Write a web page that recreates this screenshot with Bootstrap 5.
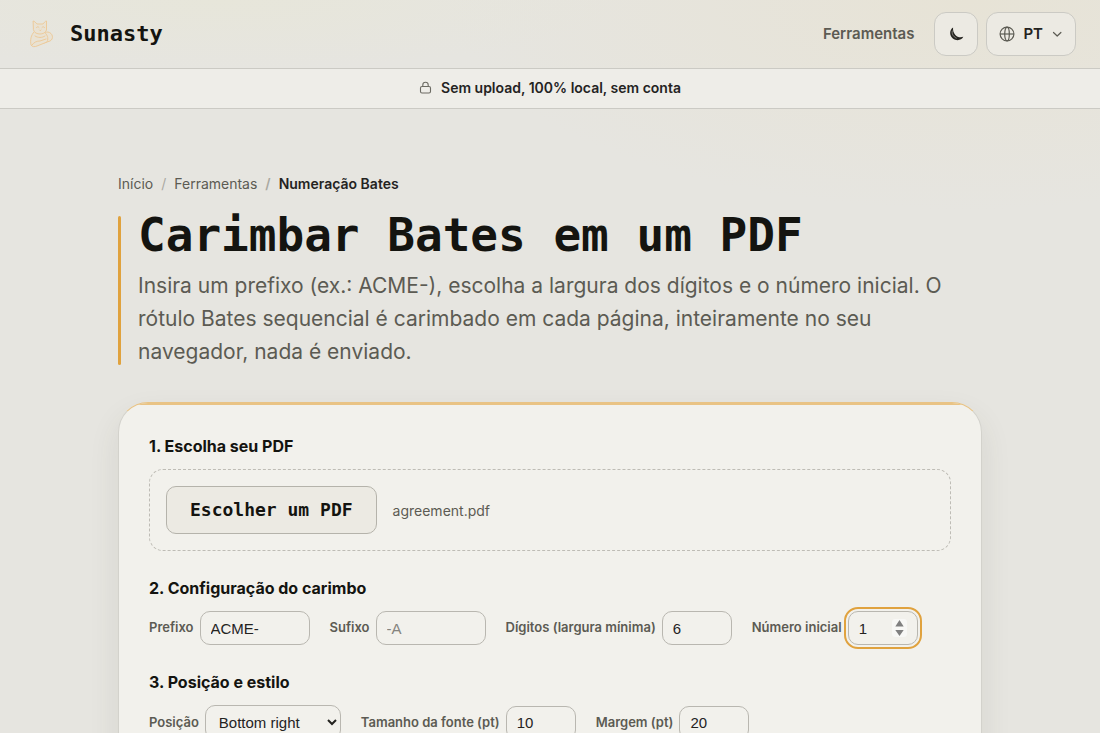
<!DOCTYPE html>
<html lang="pt">
<head>
<meta charset="utf-8">
<meta name="viewport" content="width=device-width, initial-scale=1">
<title>Numeração Bates · Sunasty</title>
<link href="https://cdn.jsdelivr.net/npm/bootstrap@5.3.0/dist/css/bootstrap.min.css" rel="stylesheet">
<style>
  :root { --ink: #141410; --soft: #5c5b53; --line: #cbcac4; --field: #b9b7b0; --amber: #e0a23e; --mono: "DejaVu Sans Mono", "Liberation Mono", monospace; }
  body { font-family: Inter, "Liberation Sans", sans-serif; color: var(--ink); min-height: 100vh;
    background: radial-gradient(ellipse 520px 210px at 88% 0, #e7e3d6 0, rgba(231,227,214,0) 100%), radial-gradient(ellipse 400px 70px at 20% 0, #e7e6da, rgba(231,230,218,0)), #e6e5e0; }
  a { color: var(--soft); text-decoration: none; }
  .site-head { padding: 12px 24px; border-bottom: 1px solid var(--line); }
  .brand { font: 700 22px/44px var(--mono); color: var(--ink); gap: 10px; }
  .nav-link-top { font-size: 15px; font-weight: 600; margin-right: 12px; }
  .tool-btn { height: 44px; min-width: 44px; padding: 0 12px; border: 1px solid var(--line); border-radius: 12px; background: #eceae3; color: #24231f; font-size: 15px; font-weight: 600; }
  .notice { height: 40px; padding-bottom: 2px; font-size: 14px; font-weight: 600; color: #24231f; background: #eeede8; border-bottom: 1px solid var(--line); gap: 9px; }
  .page { max-width: 888px; padding: 64px 12px 0; }
  .breadcrumb { font-size: 14px; line-height: 22px; margin-bottom: 17px; --bs-breadcrumb-divider-color: #aaa9a2; --bs-breadcrumb-item-padding-x: 8px; --bs-breadcrumb-item-active-color: #24231f; }
  .breadcrumb .active { font-weight: 600; }
  .hero { position: relative; padding-left: 20px; margin-bottom: 34px; }
  .hero::before { content: ""; position: absolute; left: 0; top: 4px; bottom: 3px; width: 3px; border-radius: 2px; background: var(--amber); }
  .hero h1 { font: 700 46px/46px var(--mono); margin-bottom: 11px; }
  .hero p { font-size: 21px; line-height: 33px; color: var(--soft); margin: 0; }
  .panel { position: relative; overflow: hidden; background: #f2f1ec; border: 1px solid #d3d2cc; border-top-color: #e9c384; border-radius: 30px; padding: 30px; }
  .panel-wrap { border-radius: 30px; box-shadow: 0 14px 30px rgba(70,65,45,.1); }
  .panel::before { content: ""; position: absolute; left: 0; right: 0; top: 0; height: 2px; background: #e9c384; }
  .panel h2 { font-size: 16px; line-height: 26px; font-weight: 700; margin-bottom: 10px; }
  .drop { border: 1px dashed #bebcb5; border-radius: 14px; padding: 16px; margin-bottom: 24px; gap: 16px; }
  .pick { font: 700 18px/46px var(--mono); padding: 0 23px; border: 1px solid #b5b3ab; border-radius: 10px; background: #eceae3; color: var(--ink); }
  .file-name { font-size: 14px; color: var(--soft); }
  .fields { column-gap: 20px; row-gap: 12px; margin-bottom: 24px; }
  .pair { gap: 6px; font-size: 13px; font-weight: 600; color: var(--soft); }
  .pair input, .pair select { height: 34px; border: 1px solid var(--field); border-radius: 10px; background: #f2f1ec; color: #24231f; font: 15px "Liberation Sans", sans-serif; padding: 0 10px; }
  .pair select { width: 136px; height: 35px; padding: 0 0 0 9px; }
  .w-text { width: 110px; }
  .w-num { width: 70px; }
  .pair input::placeholder { color: #85847e; }
  .pair input[type=number]::-webkit-inner-spin-button { opacity: 0; }
  .pair .current { outline: 2px solid var(--amber); outline-offset: 2px; }
  .pair .current::-webkit-inner-spin-button { -webkit-appearance: none; opacity: 1 !important; width: 15px; height: 18px; border-radius: 3px;
    background: #f8f8f6 url("data:image/svg+xml,%3Csvg xmlns='http://www.w3.org/2000/svg' viewBox='0 0 15 18'%3E%3Cpath fill='%23808080' d='M7.5 1 11.7 7.5H3.3zM7.5 17 11.7 11H3.3z'/%3E%3C/svg%3E") center/15px 18px no-repeat; }
</style>
</head>
<body>
<header class="site-head d-flex align-items-center justify-content-between">
  <a href="#" class="brand d-flex align-items-center">
    <svg width="36" height="36" viewBox="0 0 36 36" fill="#e9e2d3" stroke="#edcb9b" stroke-width="1" stroke-linejoin="round" stroke-linecap="round" aria-hidden="true">
      <path d="M19 24c-1-5 1-8 5-8 5 1 6 7 2 9-3 1-5 2-7 2"/>
      <path d="M10 16c-3 3-4 8-3 13 1 2 4 2 6 1l10-4c2-4 0-8-3-10"/>
      <path d="M9.500 5c1 0 2.500 2 3.500 3h6c1-1 2-3 3.500-3v9c-1 3-4 4-6.500 4s-6-1-6.500-4z"/>
      <path fill="none" d="M12.500 11.500c1-1 1.500-1 2.500 0m3 0c1-1 1.500-1 2.500 0M15.500 14l.700.700.800-.700M11 20c3 2 7 2 10 0M8 29c2-3 5-4 8-4l6-2"/>
    </svg>
    <span>Sunasty</span>
  </a>
  <nav class="d-flex align-items-center gap-2">
    <a href="#" class="nav-link-top">Ferramentas</a>
    <button type="button" class="tool-btn d-flex align-items-center justify-content-center" aria-label="Tema escuro">
      <svg width="18" height="18" viewBox="0 0 16 16" aria-hidden="true"><path fill="#24231f" d="M5.400 2.300C1.800 4.600 2.200 9.600 5.200 12c3.300 2.500 7.800 1.600 9.300-1.500-2.800.8-5.500.2-7.100-1.700-1.600-1.900-2.300-4-2-6.500z"/><path fill="none" stroke="#eceae3" stroke-width=".4" d="M4.800 5c-.8 2.500.4 5.300 3.800 6.800"/></svg>
    </button>
    <button type="button" class="tool-btn d-flex align-items-center" aria-label="Idioma: PT">
      <svg class="me-2" width="16" height="16" viewBox="0 0 16 16" fill="none" stroke="#5c5b53" stroke-width="1.200" aria-hidden="true"><circle cx="8" cy="8" r="6.900"/><ellipse cx="8" cy="8" rx="2.300" ry="6.900"/><path d="M1 8h14"/></svg>
      <span>PT</span>
      <svg class="ms-2" width="12" height="12" viewBox="0 0 12 12" fill="none" stroke="#5c5b53" stroke-width="1.200" stroke-linecap="round" stroke-linejoin="round" aria-hidden="true"><path d="m2.500 4.500 3.700 3.500 3.700-3.500"/></svg>
    </button>
  </nav>
</header>
<div class="notice d-flex align-items-center justify-content-center">
  <svg width="13" height="13" viewBox="0 0 13 13" fill="none" stroke="#6c6b63" stroke-width="1.100" aria-hidden="true"><rect x="1.500" y="5.500" width="10" height="6.500" rx="1.500"/><path d="M3.800 5.500V4a2.700 2.700 0 0 1 5.400 0v1.500"/></svg>
  <span>Sem upload, 100% local, sem conta</span>
</div>
<main class="page container-fluid">
  <nav aria-label="Trilha"><ol class="breadcrumb">
    <li class="breadcrumb-item"><a href="#">Início</a></li>
    <li class="breadcrumb-item"><a href="#">Ferramentas</a></li>
    <li class="breadcrumb-item active" aria-current="page">Numeração Bates</li>
  </ol></nav>
  <section class="hero">
    <h1>Carimbar Bates em um PDF</h1>
    <p>Insira um prefixo (ex.: ACME-), escolha a largura dos dígitos e o número inicial. O rótulo Bates sequencial é carimbado em cada página, inteiramente no seu navegador, nada é enviado.</p>
  </section>
  <div class="panel-wrap"><form class="panel">
    <h2>1. Escolha seu PDF</h2>
    <div class="drop d-flex flex-wrap align-items-center">
      <button type="button" class="pick">Escolher um PDF</button>
      <span class="file-name">agreement.pdf</span>
    </div>
    <h2>2. Configuração do carimbo</h2>
    <div class="fields d-flex flex-wrap align-items-center">
      <div class="pair d-flex align-items-center"><label for="prefix">Prefixo</label><input id="prefix" class="w-text" type="text" value="ACME-"></div>
      <div class="pair d-flex align-items-center"><label for="suffix">Sufixo</label><input id="suffix" class="w-text" type="text" placeholder="-A"></div>
      <div class="pair d-flex align-items-center"><label for="digits">Dígitos (largura mínima)</label><input id="digits" class="w-num" type="number" value="6"></div>
      <div class="pair d-flex align-items-center"><label for="start">Número inicial</label><input id="start" class="w-num current" type="number" value="1"></div>
    </div>
    <h2>3. Posição e estilo</h2>
    <div class="fields d-flex flex-wrap align-items-center">
      <div class="pair d-flex align-items-center"><label for="place">Posição</label><select id="place"><option>Bottom right</option><option>Bottom left</option><option>Top right</option></select></div>
      <div class="pair d-flex align-items-center"><label for="size">Tamanho da fonte (pt)</label><input id="size" class="w-num" type="number" value="10"></div>
      <div class="pair d-flex align-items-center"><label for="margin">Margem (pt)</label><input id="margin" class="w-num" type="number" value="20"></div>
    </div>
  </form></div>
</main>
<script src="https://cdn.jsdelivr.net/npm/bootstrap@5.3.0/dist/js/bootstrap.bundle.min.js"></script>
</body>
</html>
